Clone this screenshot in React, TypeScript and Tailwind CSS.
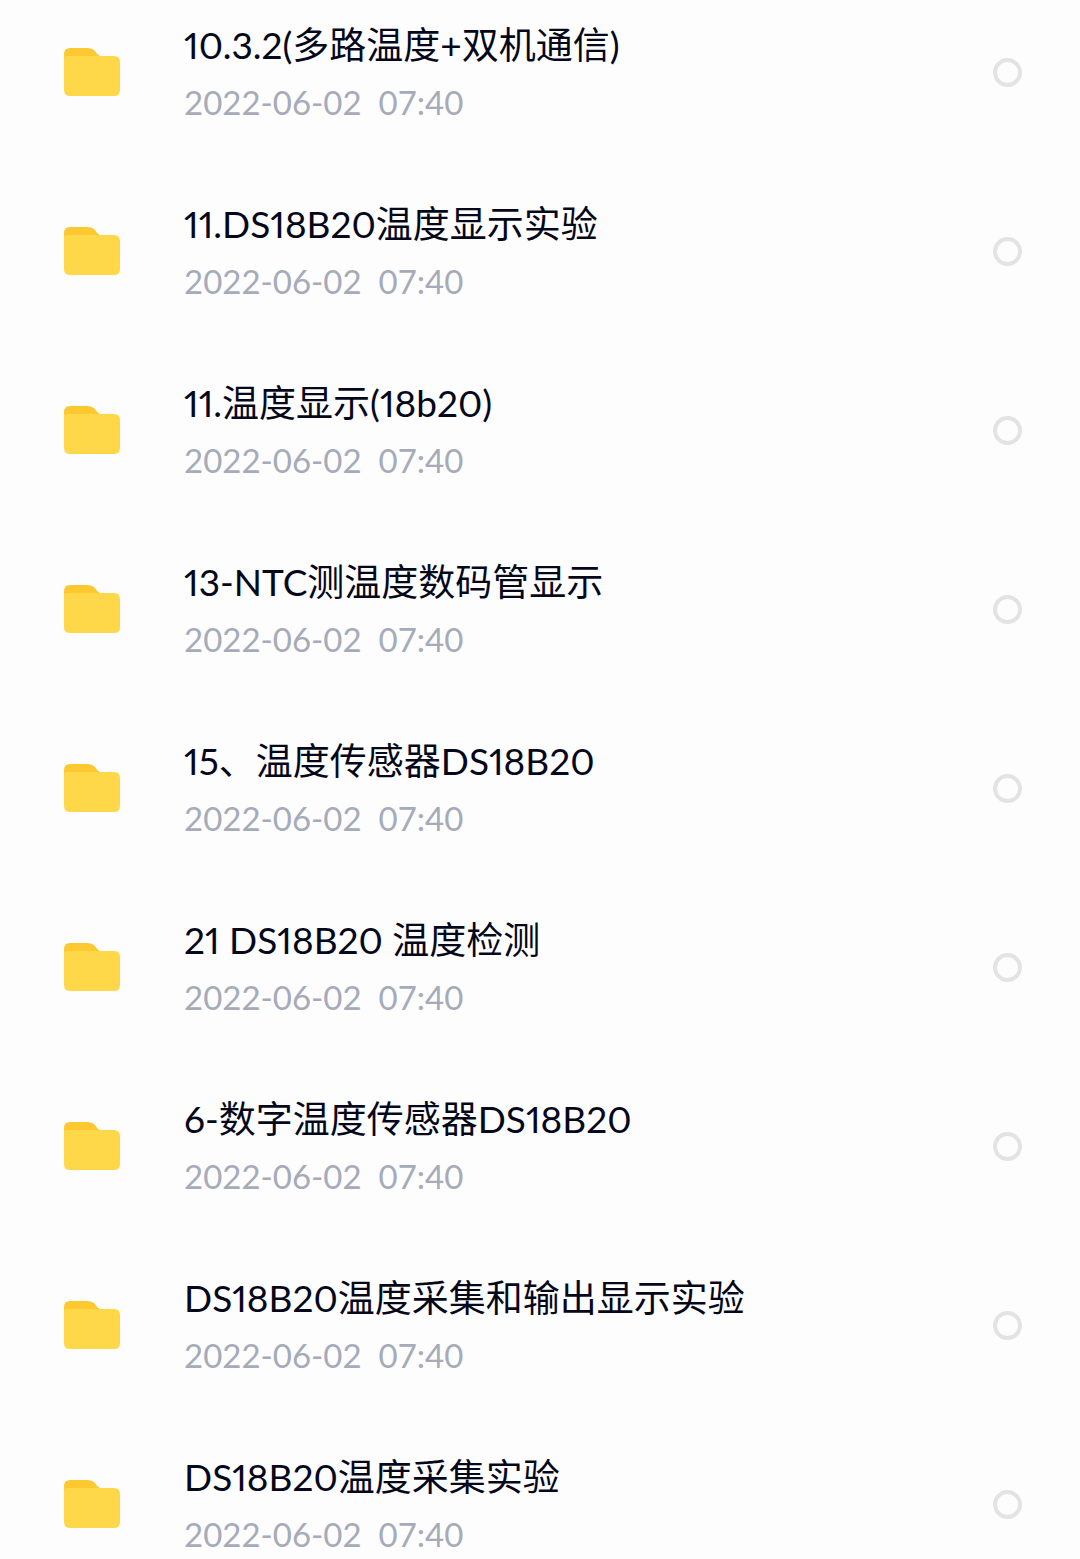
import React from 'react';

interface Folder {
  name: string;
  modified: string;
}

const folders: Folder[] = [
  { name: '10.3.2(多路温度+双机通信)', modified: '2022-06-02  07:40' },
  { name: '11.DS18B20温度显示实验', modified: '2022-06-02  07:40' },
  { name: '11.温度显示(18b20)', modified: '2022-06-02  07:40' },
  { name: '13-NTC测温度数码管显示', modified: '2022-06-02  07:40' },
  { name: '15、温度传感器DS18B20', modified: '2022-06-02  07:40' },
  { name: '21 DS18B20 温度检测', modified: '2022-06-02  07:40' },
  { name: '6-数字温度传感器DS18B20', modified: '2022-06-02  07:40' },
  { name: 'DS18B20温度采集和输出显示实验', modified: '2022-06-02  07:40' },
  { name: 'DS18B20温度采集实验', modified: '2022-06-02  07:40' },
];

function FolderIcon() {
  return (
    <svg className="w-14 h-[50px] shrink-0" viewBox="0 1 56 50" aria-hidden="true">
      <path
        d="M0 7 Q0 1 6 1 H23 Q28 1 31 4 Q34 9 37 9 V24 H0 Z"
        fill="#fdc830"
      />
      <path
        d="M0 11 Q0 9 3 9 H50 Q56 9 56 15 V43 Q56 49 50 49 H6 Q0 49 0 43 Z"
        fill="#ffd84a"
      />
    </svg>
  );
}

function FolderRow({ folder, id }: { folder: Folder; id: string }) {
  return (
    <li className="flex items-center h-[179px] pl-16 pr-[58px]">
      <FolderIcon />
      <label htmlFor={id} className="flex-1 min-w-0 ml-16 whitespace-pre">
        <span className="block text-[37px] leading-[58px] text-[#05081a] proportional-nums">{folder.name}</span>
        <span className="block text-[33px] leading-[56px] text-[#a5abb9]">{folder.modified}</span>
      </label>
      <input
        id={id}
        type="checkbox"
        className="appearance-none shrink-0 w-[29px] h-[29px] rounded-full border-4 border-[#e3e3e3] checked:bg-[#ffd84a]"
      />
    </li>
  );
}

export default function App() {
  return (
    <main className="bg-[#fdfdfd] font-['Lato','Noto_Sans_CJK_SC',sans-serif]">
      <ul className="-mt-[17px]">
        {folders.map((folder, index) => (
          <FolderRow key={folder.name} folder={folder} id={`folder-${index}`} />
        ))}
      </ul>
    </main>
  );
}
